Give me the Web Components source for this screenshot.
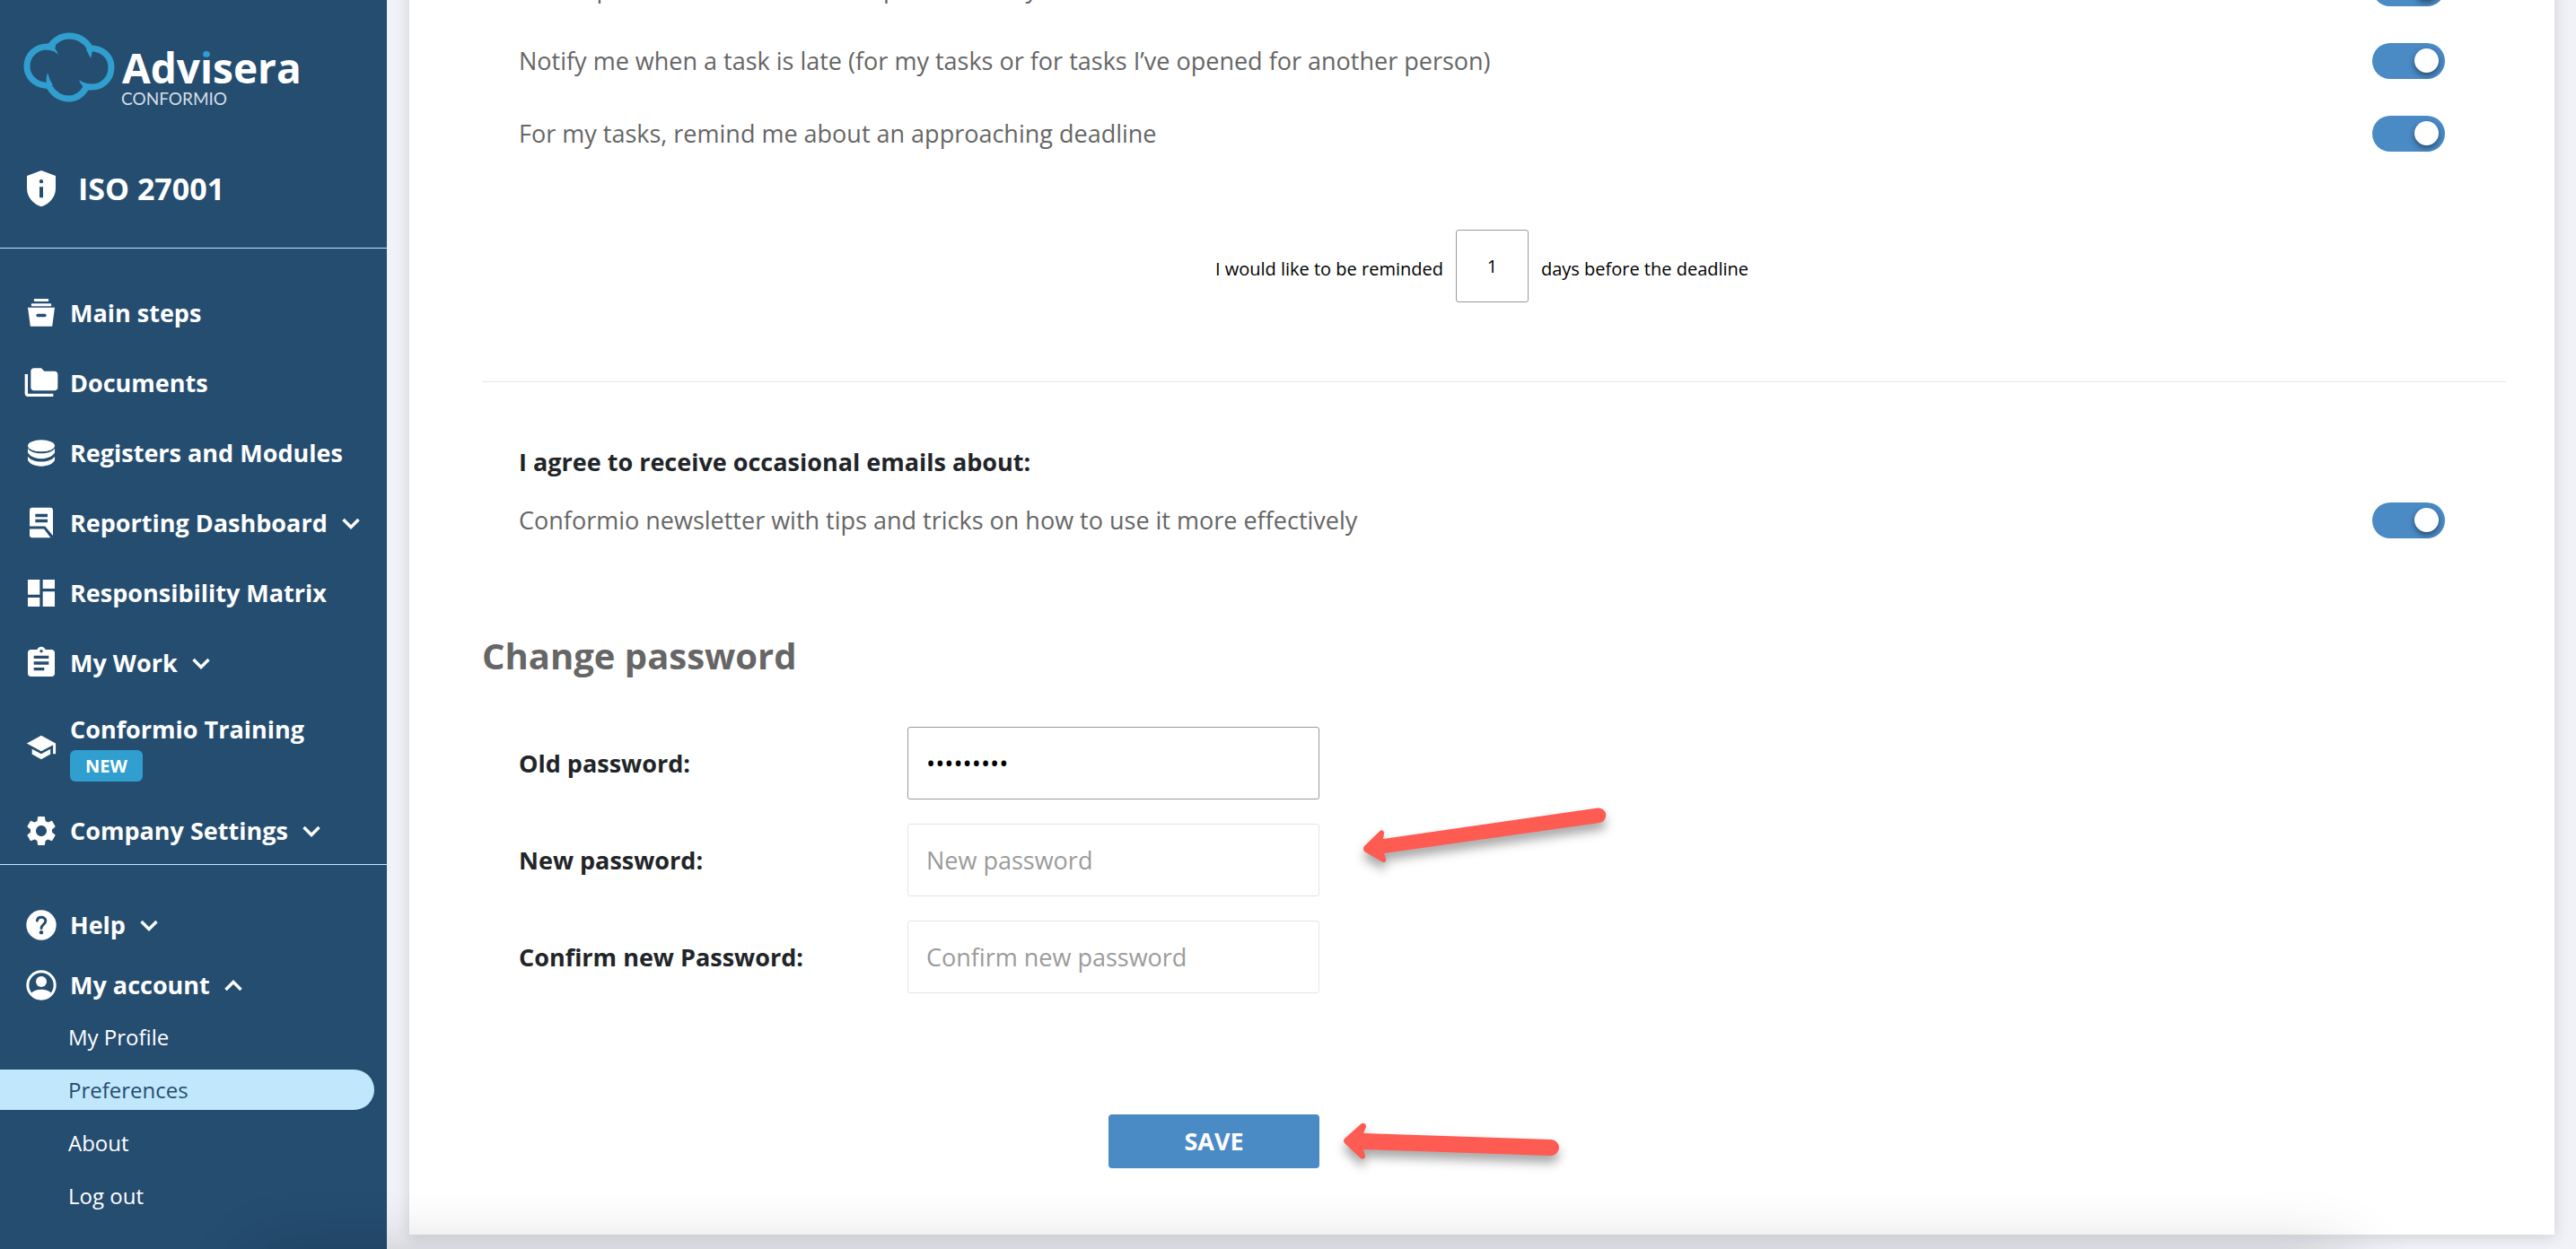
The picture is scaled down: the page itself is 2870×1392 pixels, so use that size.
<!DOCTYPE html>
<html lang="en">
<head>
<meta charset="utf-8">
<title>Preferences - Conformio</title>
<style>
    :root {
        --navy: #254d70;
        --blue: #4a8ac5;
        --cyan: #309fcf;
        --sky: #c1e7fd;
        --grey: #666;
        --ink: #212529;
    }

    body {
        margin: 0;
        min-height: 100vh;
        overflow: hidden;
        display: flex;
        background: #f1f2f7;
        font: 27px/38px "Open Sans", "Noto Sans", sans-serif;
        color: var(--grey);
    }

    /* soft shade along the bottom edge of the window */
    body::after {
        content: "";
        position: fixed;
        top: calc(100% + 18px);
        left: 290px;
        right: 260px;
        height: 200px;
        box-shadow: 0 0 80px rgba(0, 0, 0, .3);
        pointer-events: none;
    }
</style>
</head>
<body>
<side-bar>
    <brand-logo slot="brand"></brand-logo>
    <nav-item icon="steps">Main steps</nav-item>
    <nav-item icon="folders">Documents</nav-item>
    <nav-item icon="database">Registers and Modules</nav-item>
    <nav-item icon="report" expand="down">Reporting Dashboard</nav-item>
    <nav-item icon="dashboard">Responsibility Matrix</nav-item>
    <nav-item icon="clipboard" expand="down">My Work</nav-item>
    <nav-item icon="school" badge="NEW">Conformio Training</nav-item>
    <nav-item icon="gear" expand="down">Company Settings</nav-item>
    <nav-item slot="account" icon="help" expand="down">Help</nav-item>
    <nav-item slot="account" icon="person" expand="up">My account</nav-item>
    <sub-item slot="links">My Profile</sub-item>
    <sub-item slot="links" selected>Preferences</sub-item>
    <sub-item slot="links">About</sub-item>
    <sub-item slot="links">Log out</sub-item>
</side-bar>
<settings-card>
    <toggle-row>Send updates when someone replies from my team</toggle-row>
    <toggle-row>Notify me when a task is late (for my tasks or for tasks I’ve opened for another person)</toggle-row>
    <toggle-row>For my tasks, remind me about an approaching deadline</toggle-row>
    <reminder-field value="1"></reminder-field>
    <span slot="emails-title">I agree to receive occasional emails about:</span>
    <toggle-row slot="emails">Conformio newsletter with tips and tricks on how to use it more effectively</toggle-row>
    <password-form slot="password"></password-form>
</settings-card>

<script>
const icons = {
    shield: `<path fill-rule="evenodd" d="M12 0L21.6 3.6V12c0 5.600-4 10.300-9.600 12.200C6.400 22.300 2.400 17.600 2.400 12V3.600zM12 6a1.300 1.300 0 1 0 0 2.600 1.300 1.300 0 0 0 0-2.600zM10.800 11h2.400v7.200h-2.400z"/>`,
    steps: `<path fill-rule="evenodd" d="M7.600 2.400h8.800c.3 0 .5.200.5.500v.800c0 .3-.2.500-.5.500H7.600c-.3 0-.5-.2-.5-.5v-.8c0-.3.200-.5.500-.5zM5.900 5.500h12.200c.3 0 .6.200.6.600v.600c0 .4-.3.600-.6.600H5.900c-.3 0-.6-.2-.6-.6v-.6c0-.4.300-.6.600-.6zM3 8.200h18l-1.700 12.600H4.700zM9.600 12.500a1 1 0 0 0 0 2h4.800a1 1 0 0 0 0-2z"/>`,
    folders: `<path d="M3 6H1v13c0 1.100.900 2 2 2h17v-2H3V6z"/><path d="M21 4h-7l-2-2H7c-1.100 0-2 .900-2 2v11c0 1.100.900 2 2 2h14c1.100 0 2-.9 2-2V6c0-1.100-.9-2-2-2z"/>`,
    database: `<ellipse cx="12" cy="7.100" rx="9" ry="3.900"/><path d="M3 8.900c1.500 2.200 5 3.300 9 3.300s7.500-1.100 9-3.300v2.700c-1 2.400-4.700 4.100-9 4.100s-8-1.700-9-4.100z"/><path d="M3 14.200c1.500 2.100 5 3.500 9 3.500s7.500-1.400 9-3.500v2.500c-1 2.500-4.700 4.100-9 4.100s-8-1.600-9-4.100z"/>`,
    report: `<path fill-rule="evenodd" d="M5.900 1.700h12.200c1 0 1.700.7 1.700 1.700v17l-5.300-6.300H4.200V3.400c0-1 .7-1.700 1.700-1.700zM8 5.900v2h8.200v-2zM8 9.500v2h8.200v-2z"/><path d="M4.200 15.900h9.600l4.400 5.900H5.900c-1 0-1.700-.7-1.700-1.700z"/>`,
    dashboard: `<path d="M3 13h8V3H3v10zm0 8h8v-6H3v6zm10 0h8V11h-8v10zm0-18v6h8V3h-8z"/>`,
    clipboard: `<path d="M19 3h-4.180C14.400 1.840 13.300 1 12 1c-1.300 0-2.400.84-2.820 2H5c-1.100 0-2 .9-2 2v14c0 1.100.9 2 2 2h14c1.100 0 2-.9 2-2V5c0-1.100-.9-2-2-2zm-7 0c.55 0 1 .45 1 1s-.45 1-1 1-1-.45-1-1 .45-1 1-1zm2 14H7v-2h7v2zm3-4H7v-2h10v2zm0-4H7V7h10v2z"/>`,
    school: `<path transform="translate(1.400 1.400) scale(.88)" d="M5 13.180v4L12 21l7-3.820v-4L12 17l-7-3.820zM12 3L1 9l11 6 9-4.910V17h2V9L12 3z"/>`,
    gear: `<path d="M19.140 12.940c.04-.3.060-.61.060-.94 0-.32-.02-.64-.07-.94l2.030-1.580c.18-.14.230-.41.120-.61l-1.920-3.320c-.12-.22-.37-.29-.59-.22l-2.390.96c-.5-.38-1.030-.7-1.620-.94l-.36-2.540c-.04-.24-.24-.41-.48-.41h-3.840c-.24 0-.43.170-.47.410l-.36 2.540c-.59.240-1.130.570-1.620.940l-2.390-.96c-.22-.08-.47 0-.59.220L2.740 8.870c-.12.210-.08.470.120.610l2.030 1.580c-.05.3-.09.630-.09.940s.02.640.070.940l-2.030 1.580c-.18.140-.23.410-.12.610l1.920 3.320c.12.220.37.290.59.220l2.390-.96c.5.380 1.030.7 1.620.940l.36 2.540c.05.240.24.410.48.410h3.840c.24 0 .44-.17.470-.41l.36-2.540c.59-.24 1.130-.56 1.620-.94l2.390.96c.22.080.47 0 .59-.22l1.920-3.320c.12-.22.070-.47-.12-.61l-2.010-1.580zM12 15.600c-1.980 0-3.600-1.620-3.600-3.600s1.620-3.600 3.600-3.600 3.600 1.620 3.600 3.600-1.620 3.600-3.600 3.600z"/>`,
    help: `<circle cx="12" cy="12" r="10"/><path d="M9.200 9c.2-1.500 1.400-2.300 2.800-2.300 1.600 0 2.900 1 2.900 2.500 0 2.300-2.900 2.500-2.900 4.900" fill="none" stroke="#254d70" stroke-width="1.800" stroke-linecap="round"/><circle cx="12" cy="16.900" r="1.300" fill="#254d70"/>`,
    person: `<circle cx="12" cy="12" r="9.100" fill="none" stroke="currentColor" stroke-width="1.800"/><circle cx="12" cy="9.600" r="3.600"/><path d="M5.300 17.200c1.500-1.500 4-2.300 6.700-2.300s5.200.8 6.700 2.300A9 9 0 0 1 12 21.200a9 9 0 0 1-6.700-4z"/>`
};

const icon = (name) => `<svg class="icon" viewBox="0 0 24 24" fill="currentColor" aria-hidden="true">${icons[name]}</svg>`;

const chevron = (direction) => `
    <svg class="chevron" viewBox="0 0 20 20" fill="none" stroke="currentColor" stroke-width="3.400" aria-hidden="true">
        <path d="${direction === "up" ? "M1.500 15L10 6.500l8.500 8.500" : "M1.500 6l8.500 8.500L18.500 6"}"/>
    </svg>`;

class BrandLogo extends HTMLElement {
    constructor() {
        super();
        this.attachShadow({mode: "open"}).innerHTML = `
            <style>
                :host { display: block; }
                svg { display: block; width: 310px; height: 84px; }
            </style>
            <svg viewBox="0 0 310 84">
                <defs>
                    <!-- cyan dot over a white stem for the letter i -->
                    <linearGradient id="dot" gradientUnits="userSpaceOnUse" x1="0" y1="0" x2="0" y2="84">
                        <stop offset=".35" stop-color="#309fcf"/>
                        <stop offset=".35" stop-color="#fff"/>
                    </linearGradient>
                </defs>
                <g fill="none" stroke="#309fcf" stroke-width="7">
                    <path d="M29 17C35 8 43 4 51 4c10 0 18 5 23 13"/>
                    <path d="M74 18c14-1 24 9 24 21 0 13-10 23-24 22-3 0-5 0-7-1"/>
                    <path d="M71 60c-5 9-12 14-20 14-9 0-17-5-22-13"/>
                    <path d="M30 60c-3 0-5-1-7-1C12 57 4 49 4 38c0-13 10-22 23-22 3 0 6 1 8 2"/>
                </g>
                <path fill="#309fcf" d="M28 13q8 3 11 12q-6-6-13-5zM73 14q6 5 2 15q-3-6-5-10zM27 62q-3-9 0-17q2 8 6 14zM75 64q-10-1-13-11q5 4 14 5z"/>
                <text x="110" y="57" fill="#fff" font-size="46" font-weight="700">Adv<tspan fill="url(#dot)">i</tspan>sera</text>
                <text x="109" y="81" fill="#d5dee6" font-size="19" font-family="Lato, sans-serif">CONFORMIO</text>
            </svg>`;
    }
}

class NavItem extends HTMLElement {
    connectedCallback() {
        if (this.shadowRoot) return;
        const expand = this.getAttribute("expand");
        const badge = this.getAttribute("badge");
        const tag = expand ? "button" : "a";
        this.attachShadow({mode: "open"}).innerHTML = `
            <style>
                :host { display: block; }
                :host([badge]) { margin: -4px 0; }
                a, button {
                    display: flex;
                    align-items: center;
                    gap: 12px;
                    width: 100%;
                    padding: 0 0 0 26px;
                    box-sizing: border-box;
                    border: 0;
                    background: none;
                    color: #fff;
                    font: inherit;
                    font-weight: 700;
                    text-align: left;
                    text-decoration: none;
                    white-space: nowrap;
                    cursor: pointer;
                }
                .icon { flex: none; width: 40px; height: 40px; margin: -1px 0; }
                .chevron { flex: none; width: 20px; height: 20px; margin-left: 4px; }
                .text { display: grid; justify-items: start; row-gap: 4px; }
                .badge {
                    padding: 4px 17px;
                    border-radius: 6px;
                    background: var(--cyan);
                    font-size: 20px;
                    line-height: 27px;
                }
            </style>
            <${tag} ${expand ? `type="button" aria-expanded="${expand === "up"}"` : `href="#"`}>
                ${icon(this.getAttribute("icon"))}
                <span class="text"><slot></slot>${badge ? `<span class="badge">${badge}</span>` : ""}</span>
                ${expand ? chevron(expand) : ""}
            </${tag}>`;
    }
}

class SubItem extends HTMLElement {
    constructor() {
        super();
        this.attachShadow({mode: "open"}).innerHTML = `
            <style>
                :host { display: block; margin-right: 14px; border-radius: 0 23px 23px 0; }
                :host([selected]) { background: var(--sky); }
                a {
                    display: block;
                    padding-left: 76px;
                    color: #fff;
                    font-size: 24px;
                    line-height: 45px;
                    text-decoration: none;
                }
                :host([selected]) a { color: var(--navy); }
            </style>
            <a href="#"><slot></slot></a>`;
    }
}

class SideBar extends HTMLElement {
    constructor() {
        super();
        this.attachShadow({mode: "open"}).innerHTML = `
            <style>
                :host {
                    display: flex;
                    flex-direction: column;
                    flex: none;
                    width: 431px;
                    background: var(--navy);
                    color: #fff;
                }
                .brand { padding: 36px 26px 0; }
                .product {
                    display: flex;
                    align-items: center;
                    gap: 21px;
                    padding: 66px 26px 42px;
                    border-bottom: 1px solid var(--sky);
                    font-size: 34px;
                    line-height: 48px;
                    font-weight: 700;
                }
                .product .icon { width: 40px; height: 42px; }
                nav { display: grid; }
                .main { gap: 40px; padding: 53px 0 18px; border-bottom: 1px solid var(--sky); }
                .account { gap: 29px; padding: 48px 0 12px; }
                .links { gap: 14px; padding-top: 4px; }
            </style>
            <div class="brand"><slot name="brand"></slot></div>
            <div class="product">${icon("shield")}<span>ISO 27001</span></div>
            <nav class="main" aria-label="Main"><slot></slot></nav>
            <nav class="account" aria-label="Account"><slot name="account"></slot></nav>
            <nav class="links" aria-label="My account"><slot name="links"></slot></nav>`;
    }
}

class ToggleRow extends HTMLElement {
    constructor() {
        super();
        this.attachShadow({mode: "open"}).innerHTML = `
            <style>
                :host { display: block; }
                label {
                    display: flex;
                    align-items: center;
                    justify-content: space-between;
                    height: 81px;
                    cursor: pointer;
                }
                input {
                    appearance: none;
                    display: flex;
                    align-items: center;
                    box-sizing: border-box;
                    width: 81px;
                    height: 40px;
                    margin: 0;
                    padding: 0 7px;
                    border-radius: 20px;
                    background: #ccc;
                }
                input::before {
                    content: "";
                    width: 27px;
                    height: 27px;
                    border-radius: 50%;
                    background: #fff;
                    box-shadow: 0 3px 6px rgba(0, 0, 0, .45);
                }
                input:checked { justify-content: flex-end; background: var(--blue); }
            </style>
            <label><span><slot></slot></span><input type="checkbox" role="switch" checked></label>`;
    }
}

class ReminderField extends HTMLElement {
    constructor() {
        super();
        this.attachShadow({mode: "open"}).innerHTML = `
            <style>
                :host { display: block; padding-top: 67px; font-size: 20px; line-height: 28px; color: #000; }
                label { display: flex; align-items: center; justify-content: center; gap: 14px; }
                span { padding-top: 6px; }
                input {
                    box-sizing: border-box;
                    width: 81px;
                    height: 81px;
                    border: 1px solid #999;
                    border-radius: 3px;
                    font: inherit;
                    text-align: center;
                    color: inherit;
                }
            </style>
            <label>
                <span>I would like to be reminded</span>
                <input type="text" inputmode="numeric" value="${this.getAttribute("value")}">
                <span>days before the deadline</span>
            </label>`;
    }
}

class PasswordField extends HTMLElement {
    connectedCallback() {
        if (this.shadowRoot) return;
        this.attachShadow({mode: "open"}).innerHTML = `
            <style>
                :host { display: grid; grid-template-columns: 433px 459px; align-items: center; }
                label { color: var(--ink); font-weight: 700; }
                input {
                    box-sizing: border-box;
                    width: 100%;
                    height: 81px;
                    padding: 0 20px;
                    border: 1px solid #999;
                    border-radius: 3px;
                    background: #fff;
                    color: #000;
                    font: inherit;
                }
                input:placeholder-shown { border-color: #e4e4e4; }
                input::placeholder { color: #9b9b9b; opacity: 1; }
            </style>
            <label for="field"><slot></slot></label>
            <input id="field" type="password" placeholder="${this.getAttribute("placeholder") || " "}" value="${this.getAttribute("value") || ""}">`;
    }
}

// Red pointer, drawn over the form
class CalloutArrow extends HTMLElement {
    constructor() {
        super();
        this.attachShadow({mode: "open"});
    }

    connectedCallback() {
        this.shadowRoot.innerHTML = `
            <style>
                :host { display: block; pointer-events: none; }
                svg { display: block; width: 100%; overflow: visible; filter: drop-shadow(0 8px 6px rgba(0, 0, 0, .35)); }
            </style>
            ${this.getAttribute("kind") === "rising" ? `
            <svg viewBox="0 0 270 62" fill="#fe5b52" aria-hidden="true">
                <path d="M1 43Q-1 46 1 49L22 61Q26 61 25 57L23 51L263 17A8.300 8.300 0 0 0 261 .5L22 35L23 29Q23 24 19 25.500z"/>
            </svg>` : `
            <svg viewBox="0 0 240 38" fill="#fe5b52" aria-hidden="true">
                <path d="M1 18Q-1 20 1 23L19 40Q24 42 24 37L22 30L231 37A9 9 0 0 0 231 19L22 12L25 5Q25 0 20 1z"/>
            </svg>`}`;
    }
}

class PasswordForm extends HTMLElement {
    constructor() {
        super();
        this.attachShadow({mode: "open"}).innerHTML = `
            <style>
                :host { display: block; }
                h2 { margin: 0 0 52px; font-size: 40px; line-height: 54px; font-weight: 700; }
                form {
                    position: relative;
                    display: grid;
                    gap: 27px;
                    width: max-content;
                    padding-left: 41px;
                }
                button {
                    justify-self: end;
                    width: 235px;
                    height: 60px;
                    margin-top: 108px;
                    border: 0;
                    border-radius: 4px;
                    background: var(--blue);
                    color: #fff;
                    font: inherit;
                    font-weight: 700;
                }
                callout-arrow { position: absolute; }
                .to-field { left: calc(100% + 49px); top: 90px; width: 270px; }
                .to-save { left: calc(100% + 27px); bottom: 13px; width: 240px; }
            </style>
            <h2>Change password</h2>
            <form>
                <password-field value="conformio">Old password:</password-field>
                <password-field placeholder="New password">New password:</password-field>
                <password-field placeholder="Confirm new password">Confirm new Password:</password-field>
                <button type="button">SAVE</button>
                <callout-arrow class="to-field" kind="rising"></callout-arrow>
                <callout-arrow class="to-save" kind="level"></callout-arrow>
            </form>`;
    }
}

class SettingsCard extends HTMLElement {
    constructor() {
        super();
        this.attachShadow({mode: "open"}).innerHTML = `
            <style>
                /* scrolled down, so the first row is cut by the top of the window */
                :host {
                    display: block;
                    flex: 1;
                    align-self: flex-start;
                    margin: -54px 24px 16px 25px;
                    padding: 0 54px 74px 81px;
                    background: #fff;
                    box-shadow: 0 3px 16px rgba(0, 0, 0, .14);
                }
                section { padding: 0 68px 0 41px; }
                hr { margin: 88px 0 0; border: 0; border-top: 1px solid #e4e4e4; }
                h3 { margin: 0; font-size: 27px; line-height: 48px; font-weight: 700; color: var(--ink); }
                .emails { padding-top: 65px; padding-bottom: 84px; }
            </style>
            <section>
                <slot></slot>
            </section>
            <hr>
            <section class="emails">
                <h3><slot name="emails-title"></slot></h3>
                <slot name="emails"></slot>
            </section>
            <slot name="password"></slot>`;
    }
}

customElements.define("brand-logo", BrandLogo);
customElements.define("nav-item", NavItem);
customElements.define("sub-item", SubItem);
customElements.define("side-bar", SideBar);
customElements.define("toggle-row", ToggleRow);
customElements.define("reminder-field", ReminderField);
customElements.define("password-field", PasswordField);
customElements.define("callout-arrow", CalloutArrow);
customElements.define("password-form", PasswordForm);
customElements.define("settings-card", SettingsCard);
</script>
</body>
</html>
